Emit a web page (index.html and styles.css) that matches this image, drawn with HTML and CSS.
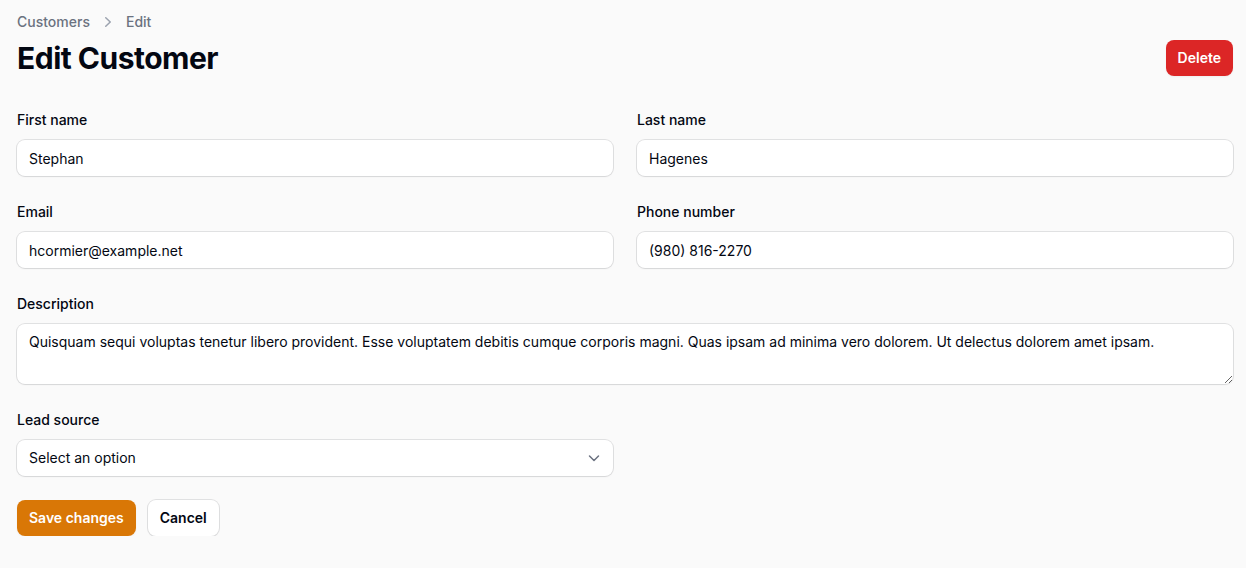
FILE: index.html
```html
<!DOCTYPE html>
<html lang="en">
<head>
<meta charset="utf-8">
<title>Edit Customer</title>
<link rel="stylesheet" href="styles.css">
</head>
<body>
<main class="page">
  <nav class="breadcrumbs">
    <a class="crumb" href="#">Customers</a>
    <svg class="crumb-sep" viewBox="0 0 20 20" fill="currentColor" aria-hidden="true"><path fill-rule="evenodd" d="M7.21 14.77a.75.75 0 0 1 .02-1.06L11.168 10 7.23 6.29a.75.75 0 1 1 1.04-1.08l4.5 4.25a.75.75 0 0 1 0 1.08l-4.5 4.25a.75.75 0 0 1-1.06-.02Z" clip-rule="evenodd"/></svg>
    <span class="crumb">Edit</span>
  </nav>
  <header class="header">
    <h1 class="title">Edit Customer</h1>
    <button class="btn btn-danger" type="button">Delete</button>
  </header>
  <form class="form">
    <div class="grid">
      <div class="field">
        <label class="label" for="first">First name</label>
        <div class="control"><input id="first" class="input" type="text" value="Stephan"></div>
      </div>
      <div class="field">
        <label class="label" for="last">Last name</label>
        <div class="control"><input id="last" class="input" type="text" value="Hagenes"></div>
      </div>
      <div class="field">
        <label class="label" for="email">Email</label>
        <div class="control"><input id="email" class="input" type="text" value="hcormier@example.net"></div>
      </div>
      <div class="field">
        <label class="label" for="phone">Phone number</label>
        <div class="control"><input id="phone" class="input" type="text" value="(980) 816-2270"></div>
      </div>
      <div class="field span-2">
        <label class="label" for="desc">Description</label>
        <div class="control"><textarea id="desc" class="textarea">Quisquam sequi voluptas tenetur libero provident. Esse voluptatem debitis cumque corporis magni. Quas ipsam ad minima vero dolorem. Ut delectus dolorem amet ipsam.</textarea></div>
      </div>
      <div class="field">
        <label class="label" for="lead">Lead source</label>
        <div class="control select-wrap">
          <div id="lead" class="select">Select an option</div>
          <svg class="chevron" viewBox="0 0 14 14" fill="none" stroke="currentColor" stroke-width="1.5" aria-hidden="true"><path d="M2.5 5l4.5 4.5 4.5-4.5" stroke-linecap="round" stroke-linejoin="round"/></svg>
        </div>
      </div>
    </div>
    <div class="actions">
      <button class="btn btn-primary" type="button">Save changes</button>
      <button class="btn btn-secondary" type="button">Cancel</button>
    </div>
  </form>
</main>
</body>
</html>
```
FILE: styles.css
```css
* { box-sizing: border-box; }
html, body { margin: 0; padding: 0; }
body {
  background: #fafafa;
  font-family: Inter, "Noto Sans", sans-serif;
  color: #030712;
  -webkit-font-smoothing: antialiased;
}
.page {
  padding: 12px 13px 0 17px;
}
.breadcrumbs {
  display: flex;
  align-items: center;
  gap: 8px;
  height: 20px;
  font-size: 14px;
  line-height: 20px;
  font-weight: 500;
}
.crumb { color: #6b7280; text-decoration: none; }
.crumb-sep { width: 20px; height: 20px; color: #9ca3af; }
.header {
  margin-top: 8px;
  display: flex;
  align-items: center;
  justify-content: space-between;
}
.title {
  margin: 0;
  font-size: 30px;
  line-height: 36px;
  font-weight: 700;
  letter-spacing: -0.5px;
  color: #030712;
}
.btn {
  font-family: inherit;
  font-size: 14px;
  line-height: 20px;
  font-weight: 600;
  padding: 8px 12px;
  border-radius: 8px;
  border: none;
  cursor: pointer;
  height: 36px;
}
.btn-danger { background: #dc2626; color: #fff; box-shadow: 0 1px 2px rgba(0,0,0,.05); }
.btn-primary { background: #d97706; color: #fff; box-shadow: 0 1px 2px rgba(0,0,0,.05); }
.btn-secondary {
  background: #fff;
  color: #030712;
  box-shadow: 0 0 0 1px rgba(3,7,18,.1), 0 1px 2px rgba(0,0,0,.05);
}
.form { margin-top: 32px; }
.grid {
  display: grid;
  grid-template-columns: 1fr 1fr;
  column-gap: 24px;
  row-gap: 24px;
}
.span-2 { grid-column: span 2; }
.field { display: flex; flex-direction: column; gap: 8px; }
.label {
  font-size: 14px;
  line-height: 24px;
  font-weight: 500;
  color: #030712;
}
.control {
  position: relative;
  background: #fff;
  border-radius: 8px;
  box-shadow: 0 0 0 1px rgba(3,7,18,.1), 0 1px 2px rgba(0,0,0,.05);
}
.input, .select {
  display: block;
  width: 100%;
  height: 36px;
  border: none;
  outline: none;
  background: transparent;
  font-family: inherit;
  font-size: 14px;
  line-height: 24px;
  padding: 6px 12px;
  color: #030712;
}
.textarea {
  display: block;
  width: 100%;
  height: 60px;
  border: none;
  outline: none;
  background: transparent;
  border-radius: 8px;
  font-family: inherit;
  font-size: 14px;
  line-height: 24px;
  padding: 6px 12px;
  color: #030712;
  resize: vertical;
}
.select-wrap { display: flex; align-items: center; }
.chevron {
  position: absolute;
  right: 12px;
  top: 11px;
  width: 14px;
  height: 14px;
  color: #6b7280;
}
.actions {
  margin-top: 24px;
  display: flex;
  gap: 12px;
}
```
